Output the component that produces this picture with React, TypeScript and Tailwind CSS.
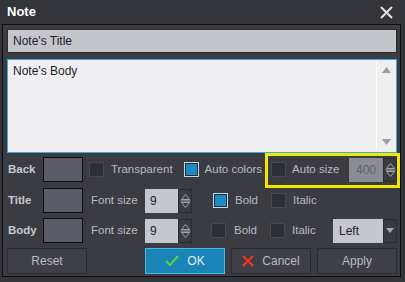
import React from 'react';

function Checkbox({ checked = false }: { checked?: boolean }) {
  if (checked) {
    return (
      <div className="h-[15px] w-[15px] shrink-0 border border-[#b9d9ec] bg-[#2b2c31] p-[1px]">
        <div className="h-full w-full bg-[#1d8cc6]" />
      </div>
    );
  }
  return <div className="h-[15px] w-[15px] shrink-0 border border-[#48494f] bg-[#2e2f34]" />;
}

function Spinner() {
  return (
    <div className="flex h-full w-[14px] shrink-0 items-center justify-center border border-[#2b2c31] bg-[#3a3b41]">
      <svg width="11" height="18" viewBox="0 0 11 18" fill="none" stroke="#a3a5ad" strokeWidth="1">
        <path d="M1.5 7.5 L5.5 2.5 L9.5 7.5 Z" />
        <path d="M0.5 9 H10.5" />
        <path d="M1.5 10.5 L5.5 15.5 L9.5 10.5 Z" />
      </svg>
    </div>
  );
}

function NumberBox({ value, disabled = false }: { value: string; disabled?: boolean }) {
  return (
    <div className="flex h-[24px] shrink-0">
      <div
        className={
          disabled
            ? 'flex w-[34px] items-center justify-end bg-[#8b8d95] pr-[7px] text-[12px] text-[#5f6168]'
            : 'flex w-[33px] items-center bg-[#c6c7cc] pl-[5px] text-[12px] text-[#1c1c2a]'
        }
      >
        {value}
      </div>
      <Spinner />
    </div>
  );
}

function Swatch() {
  return <div className="h-[25px] w-[40px] shrink-0 border border-[#0e0e11] bg-[#5b5d66]" />;
}

function Label({ children }: { children: React.ReactNode }) {
  return <div className="w-[36px] shrink-0 pl-[1px] font-bold text-[#c6c8d2]">{children}</div>;
}

function Button({ children, primary = false }: { children: React.ReactNode; primary?: boolean }) {
  return (
    <button
      type="button"
      className={
        primary
          ? 'flex h-[26px] w-[80px] items-center justify-center gap-[8px] border border-[#44b9ea] bg-[#1a84b6] text-[12px] text-[#e6ebf0]'
          : 'flex h-[26px] w-[80px] items-center justify-center gap-[8px] border border-[#2a2b30] bg-[#3f4047] text-[12px] text-[#b8bac4]'
      }
    >
      {children}
    </button>
  );
}

export default function App() {
  return (
    <div className="relative flex h-[282px] w-[405px] flex-col bg-[#34353a] font-['Liberation_Sans',Arial,sans-serif] text-[11.5px] text-[#b8bac4]">
      <div className="flex h-[24px] shrink-0 items-center justify-between pl-[7px] pr-[12px]">
        <span className="text-[13px] font-bold text-white">Note</span>
        <svg width="13" height="13" viewBox="0 0 13 13" stroke="#e2e2e6" strokeWidth="2">
          <path d="M1 1 L12 12 M12 1 L1 12" />
        </svg>
      </div>

      <div className="ml-[2px] flex h-[253px] w-[399px] flex-col border border-[#0f0f12] bg-[#3b3c42] pl-[4px] pr-[3px] pt-[4px]">
        <div className="flex h-[24px] items-center border border-[#2a2b2f] bg-[#c5c6cb] pl-[5px] text-[12px] text-[#1d1d28]">
          Note's Title
        </div>

        <div className="mt-[6px] flex h-[94px] border border-[#35ade2] bg-[#efeff1]">
          <div className="flex-1 pl-[5px] pt-[2px] text-[12px] text-[#1d1d28]">Note's Body</div>
          <div className="my-[2px] flex w-[20px] flex-col items-center justify-between border-l border-white py-[5px]">
            <svg width="9" height="6" viewBox="0 0 9 6"><path d="M0 6 L4.5 0 L9 6 Z" fill="#9c9da3" /></svg>
            <svg width="9" height="6" viewBox="0 0 9 6"><path d="M0 0 L4.5 6 L9 0 Z" fill="#9c9da3" /></svg>
          </div>
        </div>

        <div className="mt-[4px] flex h-[25px] items-center">
          <Label>Back</Label>
          <Swatch />
          <div className="ml-[6px]"><Checkbox /></div>
          <span className="ml-[7px]">Transparent</span>
          <div className="ml-[11px]"><Checkbox checked /></div>
          <span className="ml-[6px]">Auto colors</span>
          <div className="ml-[9px]"><Checkbox /></div>
          <span className="ml-[6px]">Auto size</span>
          <div className="ml-auto"><NumberBox value="400" disabled /></div>
        </div>

        <div className="mt-[6px] flex h-[25px] items-center">
          <Label>Title</Label>
          <Swatch />
          <span className="ml-[8px] w-[54px]">Font size</span>
          <NumberBox value="9" />
          <div className="ml-[21px]"><Checkbox checked /></div>
          <span className="ml-[7px] w-[36px]">Bold</span>
          <Checkbox />
          <span className="ml-[7px]">Italic</span>
        </div>

        <div className="mt-[5px] flex h-[25px] items-center">
          <Label>Body</Label>
          <Swatch />
          <span className="ml-[8px] w-[54px]">Font size</span>
          <NumberBox value="9" />
          <div className="ml-[19px]"><Checkbox /></div>
          <span className="ml-[8px] w-[36px]">Bold</span>
          <Checkbox />
          <span className="ml-[7px]">Italic</span>
          <div className="ml-auto flex h-[24px]">
            <div className="flex w-[50px] items-center bg-[#c6c7cc] pl-[6px] text-[12px] text-[#1c1c2a]">Left</div>
            <div className="flex w-[14px] items-center justify-center border border-[#2b2c31] bg-[#3a3b41]">
              <svg width="8" height="5" viewBox="0 0 8 5"><path d="M0 0 L4 5 L8 0 Z" fill="#a3a5ad" /></svg>
            </div>
          </div>
        </div>

        <div className="mt-[5px] flex items-center">
          <Button>Reset</Button>
          <div className="ml-auto flex gap-[6px]">
            <Button primary>
              <svg width="14" height="12" viewBox="0 0 14 12" fill="none" stroke="#5fcb3e" strokeWidth="2.2">
                <path d="M1 6 L5 10 L13 1" />
              </svg>
              <span>OK</span>
            </Button>
            <Button>
              <svg width="12" height="12" viewBox="0 0 12 12" stroke="#ec3520" strokeWidth="2.4">
                <path d="M1 1 L11 11 M11 1 L1 11" />
              </svg>
              <span>Cancel</span>
            </Button>
            <Button>Apply</Button>
          </div>
        </div>
      </div>

      <div className="pointer-events-none absolute left-[265px] top-[153px] h-[35px] w-[135px] border-[3px] border-[#f3e600]" />
    </div>
  );
}
